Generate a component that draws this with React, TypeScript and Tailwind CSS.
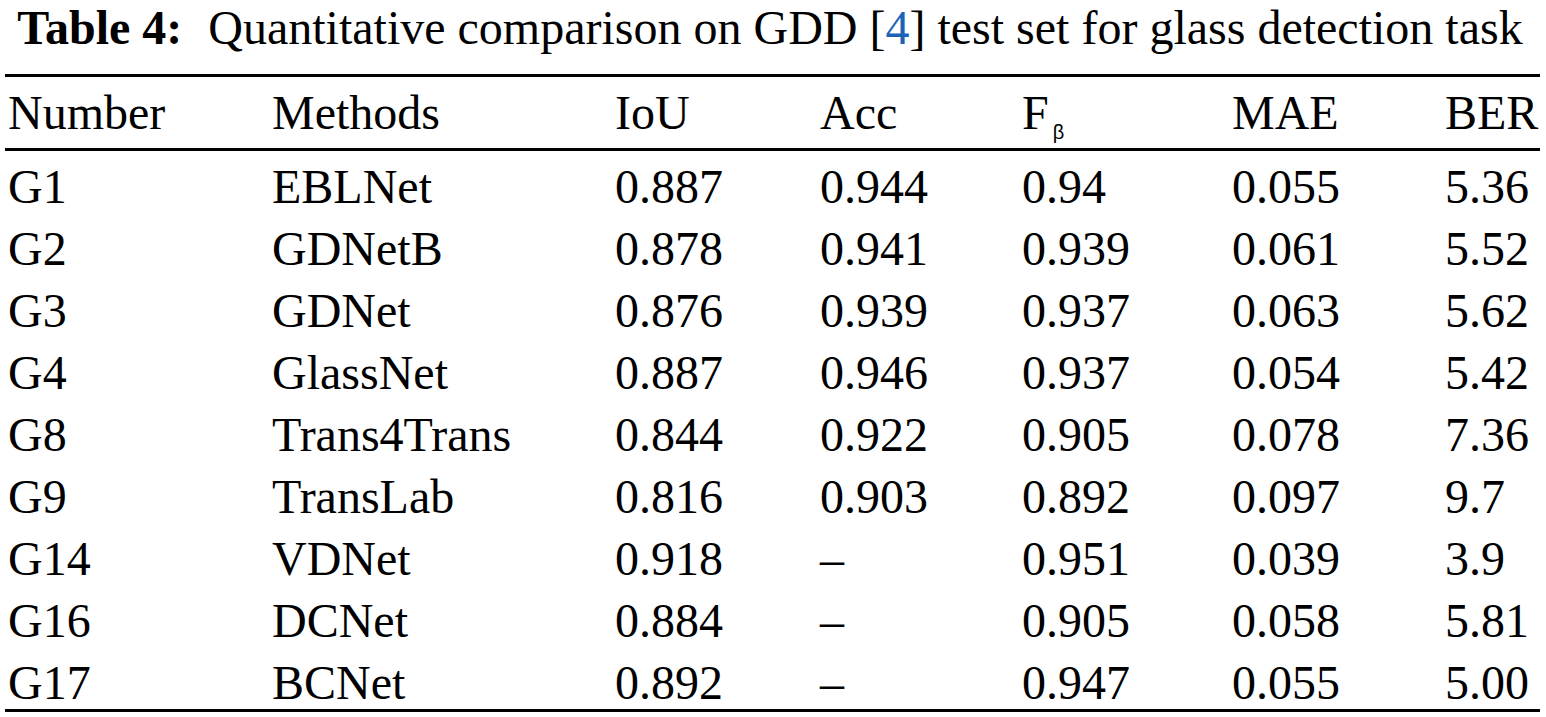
import React from 'react';

const rows: string[][] = [
  ['G1', 'EBLNet', '0.887', '0.944', '0.94', '0.055', '5.36'],
  ['G2', 'GDNetB', '0.878', '0.941', '0.939', '0.061', '5.52'],
  ['G3', 'GDNet', '0.876', '0.939', '0.937', '0.063', '5.62'],
  ['G4', 'GlassNet', '0.887', '0.946', '0.937', '0.054', '5.42'],
  ['G8', 'Trans4Trans', '0.844', '0.922', '0.905', '0.078', '7.36'],
  ['G9', 'TransLab', '0.816', '0.903', '0.892', '0.097', '9.7'],
  ['G14', 'VDNet', '0.918', '–', '0.951', '0.039', '3.9'],
  ['G16', 'DCNet', '0.884', '–', '0.905', '0.058', '5.81'],
  ['G17', 'BCNet', '0.892', '–', '0.947', '0.055', '5.00'],
];

const cols = 'grid grid-cols-[264px_343px_205px_202px_210px_213px_1fr] pl-[3px]';

export default function App() {
  return (
    <div
      className="w-[1546px] h-[717px] bg-white text-black overflow-hidden"
      style={{ fontFamily: '"Liberation Serif", "Times New Roman", serif' }}
    >
      <p className="text-center text-[48px] leading-[56px] whitespace-nowrap pr-[6px]">
        <span className="font-bold">Table 4:</span>
        <span className="inline-block w-[14px]" /> Quantitative comparison on GDD [
        <span className="text-[#1c63b7]">4</span>] test set for glass detection task
      </p>

      <div className="ml-[5px] w-[1535px] mt-[18px] border-t-[3px] border-b-[3px] border-black">
        <div className={`${cols} h-[74px] items-center border-b-[3px] border-black text-[48px]`}>
          <div>Number</div>
          <div>Methods</div>
          <div>IoU</div>
          <div>Acc</div>
          <div className="flex items-baseline">
            F<span className="text-[20px] ml-[4px] relative top-[10px]" style={{ fontFamily: '"Liberation Sans", Arial, sans-serif' }}>β</span>
          </div>
          <div>MAE</div>
          <div>BER</div>
        </div>
        {rows.map((r) => (
          <div key={r[0]} className={`${cols} h-[62px] items-center text-[48px]`}>
            {r.map((c, i) => (
              <div key={i}>{c}</div>
            ))}
          </div>
        ))}
      </div>
    </div>
  );
}
